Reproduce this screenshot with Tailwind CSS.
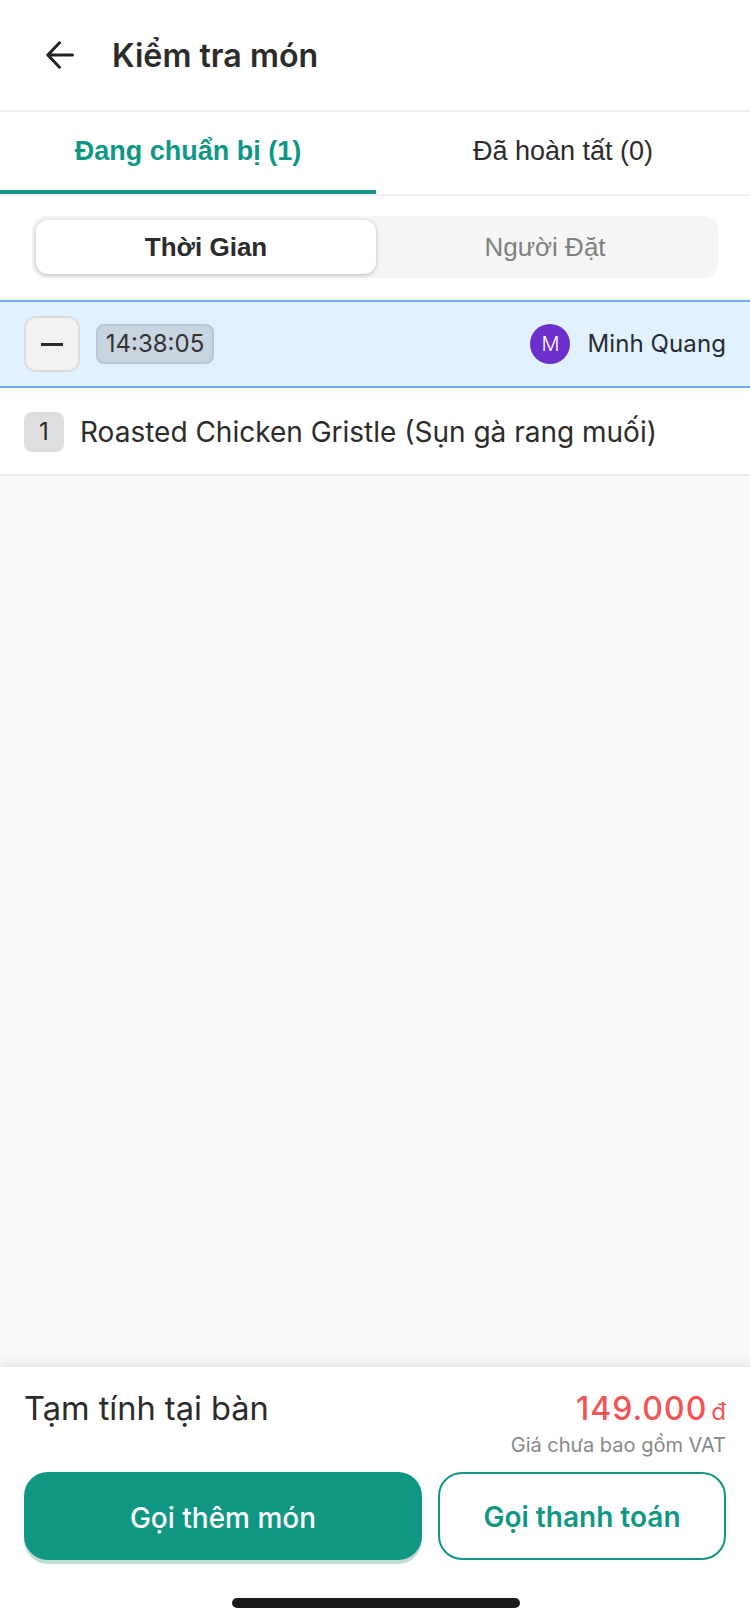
<!DOCTYPE html>
<html lang="vi">
<head>
  <meta charset="UTF-8" />
  <meta name="viewport" content="width=device-width, initial-scale=1" />
  <title>Kiểm tra món</title>
  <script src="https://cdn.jsdelivr.net/npm/@tailwindcss/browser@4"></script>
</head>
<body class="font-['Inter',sans-serif] text-[#2b2b2b]">
  <div class="w-[750px] h-[1624px] flex flex-col bg-[#f9f9f9] overflow-hidden">
    <!-- Header -->
    <header class="h-[112px] shrink-0 bg-white border-b-2 border-[#f0f0f0] flex items-center pl-[46px] gap-[38px]">
      <svg class="w-[28px] h-[28px]" viewBox="0 0 28 28" fill="none" stroke="#222" stroke-width="3" stroke-linecap="round" stroke-linejoin="round">
        <path d="M26.5 14H1.8M13.5 1.8 1.8 14l11.7 12.2" />
      </svg>
      <h1 class="text-[32.2px] font-semibold leading-none pt-[3px]">Kiểm tra món</h1>
    </header>

    <!-- Tabs -->
    <nav class="h-[84px] shrink-0 bg-white border-b-2 border-[#f0f0f0] flex text-[27px] font-['Liberation_Sans',sans-serif]">
      <div class="w-[376px] h-[82px] border-b-4 border-[#0f9784] flex items-center justify-center pt-[1px] font-bold text-[#0f9784]">Đang chuẩn bị (1)</div>
      <div class="flex-1 flex items-center justify-center pb-[3px]">Đã hoàn tất (0)</div>
    </nav>

    <!-- Segmented control -->
    <div class="h-[104px] shrink-0 bg-white border-b-2 border-[#f0f0f0] pt-[20px] pl-[32px]">
      <div class="w-[686px] h-[62px] bg-[#f5f5f5] rounded-[14px] p-[4px] flex text-[26px] font-['Liberation_Sans',sans-serif]">
        <div class="w-[340px] h-[54px] bg-white rounded-[12px] shadow-[0_1px_4px_rgba(0,0,0,0.25)] flex items-center justify-center pt-[1px] font-bold">Thời Gian</div>
        <div class="flex-1 flex items-center justify-center pt-[1px] text-[#808080]">Người Đặt</div>
      </div>
    </div>

    <!-- Order group -->
    <div class="h-[88px] shrink-0 bg-[#e2f1fe] border-y-2 border-[#6cb0f0] flex items-center pl-[24px] pr-[24px]">
      <div class="w-[56px] h-[56px] bg-[#f2f2f2] border-2 border-[#dcdcdc] rounded-[12px] flex items-center justify-center">
        <div class="w-[22px] h-[3px] bg-[#2b2b2b]"></div>
      </div>
      <div class="ml-[16px] w-[118px] h-[40px] bg-[#c8d5e0] border-2 border-[#b8c8d6] rounded-[8px] flex items-center justify-center text-[24px] text-[#333]">14:38:05</div>
      <div class="ml-auto w-[40px] h-[40px] rounded-full bg-[#6c2fcb] flex items-center justify-center text-white text-[20px] font-light">M</div>
      <div class="ml-[17px] whitespace-nowrap text-[24px] tracking-[0.1px] text-[#252b33]">Minh Quang</div>
    </div>

    <!-- Item -->
    <div class="h-[88px] shrink-0 bg-white border-b-2 border-[#ebebeb] flex items-center pl-[24px]">
      <div class="w-[40px] h-[40px] mt-[2px] bg-[#dedede] rounded-[8px] flex items-center justify-center text-[24px]">1</div>
      <div class="ml-[16px] text-[28px] pt-[1px]">Roasted Chicken Gristle (Sụn gà rang muối)</div>
    </div>

    <div class="flex-1"></div>

    <!-- Footer -->
    <footer class="h-[257px] shrink-0 bg-white shadow-[0_-3px_12px_rgba(0,0,0,0.1)] px-[24px] pt-[22px] relative">
      <div class="flex justify-between items-start h-[83px]">
        <div class="text-[32.6px] leading-[38px]">Tạm tính tại bàn</div>
        <div class="flex flex-col items-end">
          <div class="flex items-baseline text-[#f25454] leading-[40px]">
            <span class="text-[32px] font-medium tracking-[1px]">149.000</span>
            <span class="ml-[4px] text-[24px]">đ</span>
          </div>
          <div class="text-[20px] leading-[27px] text-[#888]">Giá chưa bao gồm VAT</div>
        </div>
      </div>
      <div class="flex gap-[16px]">
        <div class="w-[398px] h-[88px] rounded-[24px] bg-[#0f9784] shadow-[0_4px_0_#c0dcd5] flex items-center justify-center text-white text-[28px] font-medium pt-[3px]">Gọi thêm món</div>
        <div class="w-[288px] h-[88px] rounded-[24px] bg-white border-2 border-[#0f9784] flex items-center justify-center text-[#0f9784] text-[28px] font-semibold pt-[2px]">Gọi thanh toán</div>
      </div>
      <div class="absolute left-[232px] top-[231px] w-[288px] h-[10px] rounded-full bg-[#1a1a1a]"></div>
    </footer>
  </div>
</body>
</html>
